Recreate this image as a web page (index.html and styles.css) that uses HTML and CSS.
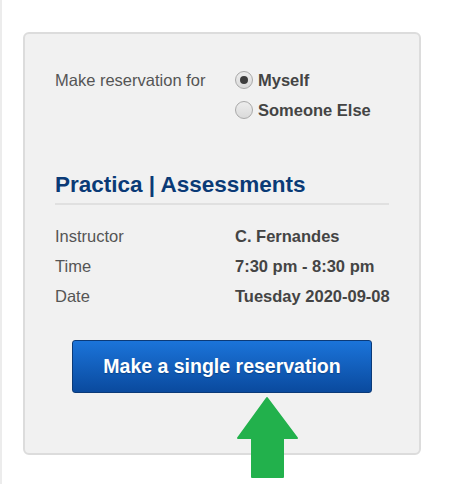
FILE: index.html
```html
<!DOCTYPE html>
<html>
<head>
<meta charset="utf-8">
<link rel="stylesheet" href="styles.css">
</head>
<body>
<div class="page">
  <div class="card">
    <div class="for-row">
      <div class="label">Make reservation for</div>
      <div class="options">
        <label class="opt"><input type="radio" name="who" checked><span>Myself</span></label>
        <label class="opt"><input type="radio" name="who"><span>Someone Else</span></label>
      </div>
    </div>
    <h2 class="title">Practica | Assessments</h2>
    <div class="details">
      <div class="label">Instructor</div><div class="value">C. Fernandes</div>
      <div class="label">Time</div><div class="value">7:30 pm - 8:30 pm</div>
      <div class="label">Date</div><div class="value">Tuesday 2020-09-08</div>
    </div>
    <div class="actions">
      <button class="btn">Make a single reservation</button>
    </div>
  </div>
  <svg class="arrow" width="76" height="94" viewBox="0 0 76 94">
    <polygon points="37,8 67,48 53,48 53,87 22,87 22,48 8,48" fill="#22b14c" stroke="#22b14c" stroke-width="2" stroke-linejoin="round"/>
  </svg>
</div>
</body>
</html>
```

FILE: styles.css
```css
html, body {
  margin: 0;
  padding: 0;
  background: #fff;
}
body {
  font-family: "Liberation Sans", Arial, sans-serif;
  color: #555;
}
.page {
  position: relative;
  min-height: 484px;
  box-sizing: border-box;
  border-left: 2px solid #ececec;
  padding: 32px 0 0 21px;
}
.card {
  width: 398px;
  box-sizing: border-box;
  background: #f1f1f1;
  border: 2px solid #dcdcdc;
  border-radius: 6px;
  padding: 31px 30px 60px;
}
.for-row {
  display: grid;
  grid-template-columns: 180px 1fr;
  font-size: 16.5px;
  line-height: 30px;
}
.label {
  color: #555;
  white-space: nowrap;
}
.options {
  display: flex;
  flex-direction: column;
}
.opt {
  display: flex;
  align-items: center;
  gap: 5px;
  height: 30px;
  font-weight: bold;
  color: #444;
  white-space: nowrap;
}
.opt input {
  appearance: none;
  -webkit-appearance: none;
  margin: 0;
  width: 18px;
  height: 18px;
  border-radius: 50%;
  border: 1px solid #a9a9a9;
  background: linear-gradient(#ededed, #dadada);
  box-sizing: border-box;
  display: grid;
  place-items: center;
}
.opt input:checked::after {
  content: "";
  width: 8px;
  height: 8px;
  border-radius: 50%;
  background: #3d3d3d;
}
.title {
  margin: 47px 0 0;
  font-size: 22.5px;
  line-height: 26px;
  font-weight: bold;
  color: #0a3a76;
  padding-bottom: 5px;
  border-bottom: 2px solid #e0e0e0;
}
.details {
  margin-top: 16px;
  display: grid;
  grid-template-columns: 180px 1fr;
  font-size: 16.5px;
  line-height: 30px;
}
.value {
  font-weight: bold;
  color: #444;
  white-space: nowrap;
}
.actions {
  margin-top: 29px;
  display: flex;
  justify-content: center;
}
.btn {
  width: 300px;
  height: 53px;
  box-sizing: border-box;
  border: 1px solid #0b3a78;
  border-radius: 3px;
  background: linear-gradient(#1b74da, #0a4a9e);
  color: #fff;
  font-family: "Liberation Sans", Arial, sans-serif;
  font-size: 19.5px;
  font-weight: bold;
  text-shadow: 0 1px 1px rgba(0,0,0,0.25);
  padding: 0;
}
.arrow {
  position: absolute;
  left: 228px;
  top: 390px;
}
```
